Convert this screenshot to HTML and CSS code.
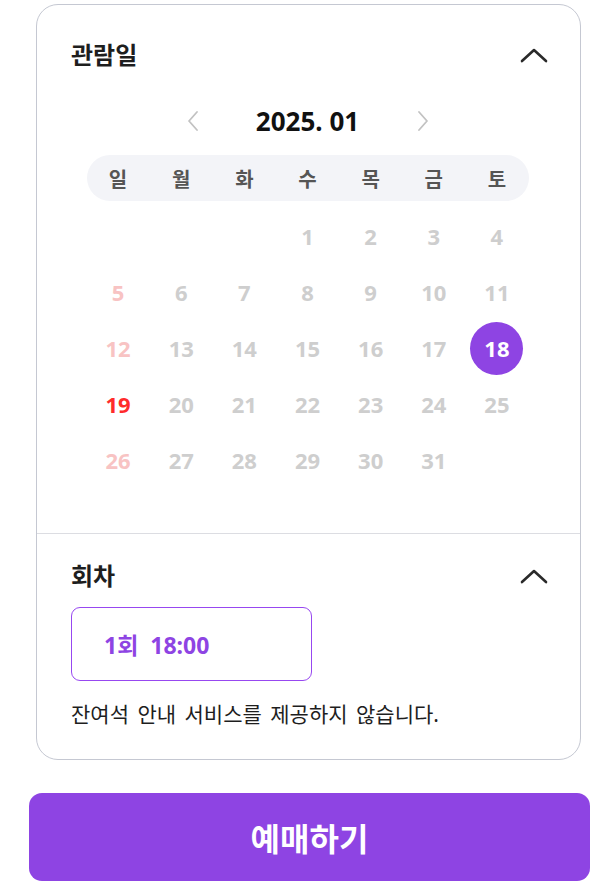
FILE: index.html
```html
<!DOCTYPE html>
<html lang="ko">
<head>
    <meta charset="UTF-8">
    <meta name="viewport" content="width=device-width, initial-scale=1.0">
    <title>관람일 선택</title>
    <link rel="stylesheet" href="styles.css">
</head>
<body>
    <div class="page">
        <div class="card">
            <!-- 관람일 -->
            <section class="section">
                <div class="section-head">
                    <h2>관람일</h2>
                    <svg class="chevron" width="28" height="16" viewBox="0 0 28 16"><polyline points="2,14 14,3 26,14" /></svg>
                </div>

                <div class="month-nav">
                    <svg class="arrow" width="14" height="22" viewBox="0 0 14 22"><polyline points="11,2 3,11 11,20" /></svg>
                    <span class="month">2025. 01</span>
                    <svg class="arrow" width="14" height="22" viewBox="0 0 14 22"><polyline points="3,2 11,11 3,20" /></svg>
                </div>

                <div class="calendar">
                    <div class="weekdays">
                        <span>일</span><span>월</span><span>화</span><span>수</span><span>목</span><span>금</span><span>토</span>
                    </div>
                    <div class="days" id="days"></div>
                </div>
            </section>

            <!-- 회차 -->
            <section class="section section-time">
                <div class="section-head">
                    <h2>회차</h2>
                    <svg class="chevron" width="28" height="16" viewBox="0 0 28 16"><polyline points="2,14 14,3 26,14" /></svg>
                </div>
                <button class="time-btn" type="button">1회&nbsp;&nbsp;18:00</button>
                <p class="notice">잔여석 안내 서비스를 제공하지 않습니다.</p>
            </section>
        </div>

        <button class="book-btn" type="button">예매하기</button>
    </div>

    <script>
        // 2025년 1월: 1일이 수요일
        const days = document.getElementById('days');
        const offset = 3;
        for (let i = 0; i < offset; i++) {
            days.appendChild(document.createElement('span'));
        }
        for (let d = 1; d <= 31; d++) {
            const cell = document.createElement('span');
            cell.textContent = d;
            const dow = (offset + d - 1) % 7;
            if (dow === 0) cell.className = 'sun';
            if (d === 19) cell.className = 'sun today';
            if (d === 18) cell.className = 'selected';
            days.appendChild(cell);
        }
    </script>
</body>
</html>
```

FILE: styles.css
```css
body {
    margin: 0;
    background: #fff;
    font-family: "Noto Sans", "Noto Sans CJK KR", sans-serif;
    color: #222;
}

.page {
    width: 561px;
    padding: 4px 20px 14px 29px;
}

.card {
    margin: 0 9px 33px 7px;
    border: 1px solid #c5c8d2;
    border-radius: 22px;
    overflow: hidden;
}

.section {
    padding: 36px 32px 45px 34px;
}

.section-time {
    border-top: 1px solid #dcdde2;
    padding-top: 28px;
    padding-bottom: 32px;
}

.section-head {
    display: flex;
    justify-content: space-between;
    align-items: center;
    height: 28px;
}

.section-head h2 {
    margin: 0;
    font-size: 24px;
    line-height: 28px;
    font-weight: 700;
    color: #1e1e1e;
}

.chevron polyline,
.arrow polyline {
    fill: none;
    stroke-linecap: round;
    stroke-linejoin: round;
}

.chevron polyline {
    stroke: #2a2a2a;
    stroke-width: 2.6;
}

.arrow polyline {
    stroke: #c2c2c2;
    stroke-width: 1.8;
}

.month-nav {
    display: flex;
    justify-content: center;
    align-items: center;
    gap: 55px;
    margin-top: 38px;
    margin-right: 4px;
    height: 28px;
}

.month {
    font-size: 26px;
    font-weight: 700;
    color: #111;
    width: 106px;
    text-align: center;
    white-space: nowrap;
}

.calendar {
    width: 442px;
    margin: 20px auto 0;
    position: relative;
    left: -2px;
}

.weekdays,
.days {
    display: grid;
    grid-template-columns: repeat(7, 1fr);
}

.weekdays {
    background: #f3f4f8;
    border-radius: 23px;
    height: 46px;
    align-items: center;
}

.weekdays span {
    text-align: center;
    font-size: 20px;
    font-weight: 700;
    color: #555;
}

.days {
    margin-top: 7px;
    grid-auto-rows: 56px;
}

.days span {
    display: flex;
    justify-content: center;
    align-items: center;
    font-size: 22px;
    font-weight: 700;
    color: #cecece;
}

.days .sun {
    color: #f8c3c3;
}

.days .today {
    color: #ff2b2b;
}

.days .selected {
    width: 53px;
    height: 53px;
    margin: auto;
    border-radius: 50%;
    background: #8e44e3;
    color: #fff;
}

.time-btn {
    display: block;
    margin-top: 17px;
    width: 241px;
    height: 74px;
    padding: 0 0 0 32px;
    text-align: left;
    background: #fff;
    border: 1px solid #9747f0;
    border-radius: 9px;
    font-family: inherit;
    font-size: 23px;
    font-weight: 700;
    color: #8e44e3;
}

.notice {
    margin: 20px 0 0;
    font-size: 21px;
    line-height: 26px;
    word-spacing: 3px;
    color: #1e1e1e;
}

.book-btn {
    display: block;
    width: 561px;
    height: 88px;
    border: none;
    border-radius: 13px;
    background: #8e44e3;
    color: #fff;
    font-family: inherit;
    font-size: 32px;
    font-weight: 700;
}
```
